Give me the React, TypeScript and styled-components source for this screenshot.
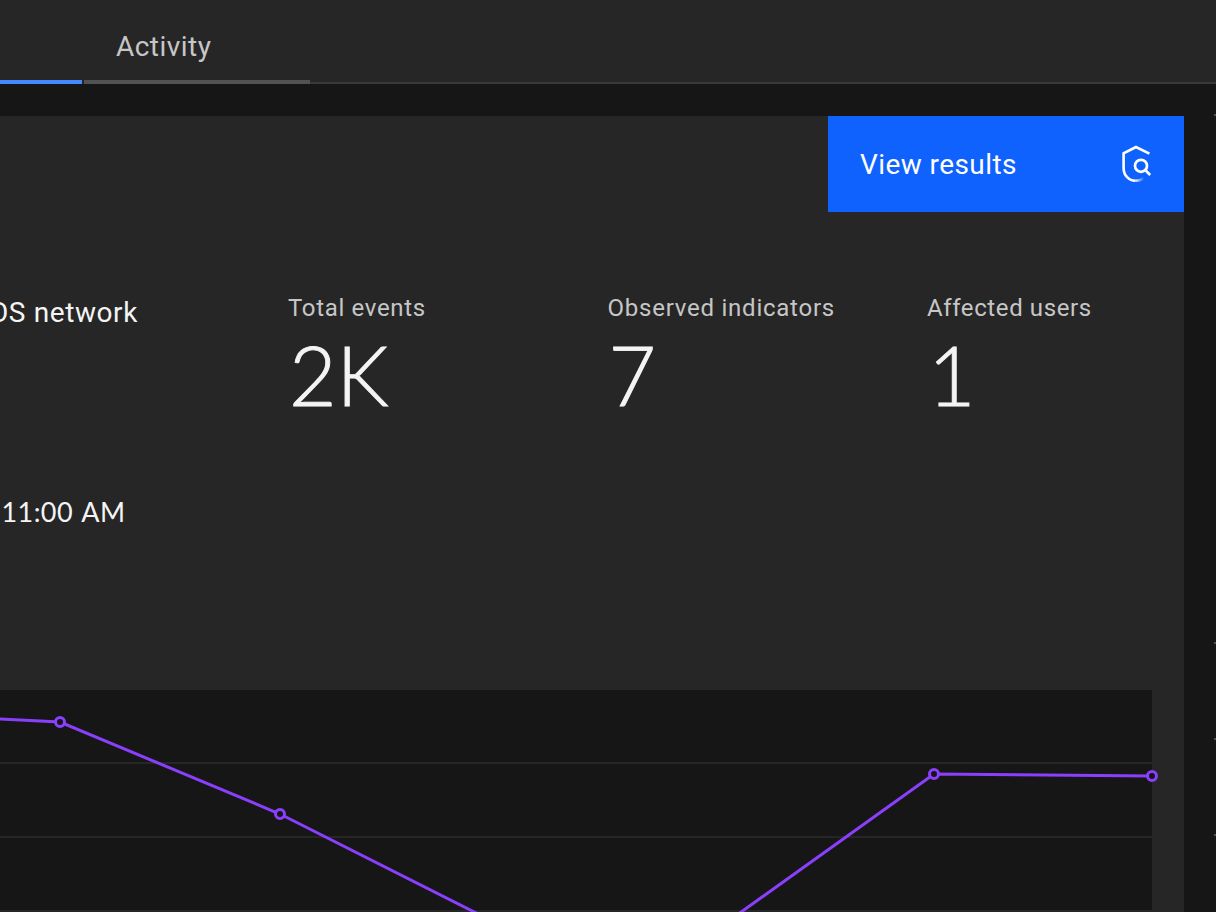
import styled, { createGlobalStyle } from "styled-components";

const Global = createGlobalStyle`
  *, *::before, *::after { box-sizing: border-box; }
  body {
    margin: 0;
    background: #161616;
    overflow: hidden;
    font-family: Roboto, "Liberation Sans", sans-serif;
    font-weight: 400;
    color: #f4f4f4;
  }
`;

const Page = styled.div`
  display: flex;
  flex-direction: column;
  width: 1216px;
  height: 912px;
  overflow: hidden;
`;

const TabBar = styled.nav`
  display: flex;
  gap: 2px;
  height: 84px;
  background: #262626;
  flex: none;
`;

const Tab = styled.div<{ $width: number; $active?: boolean }>`
  width: ${(p) => p.$width}px;
  padding: 25px 0 0 32px;
  border-bottom: 4px solid ${(p) => (p.$active ? "#4589ff" : "#525252")};
  font-size: 28px;
  line-height: 44px;
  letter-spacing: 0.46px;
  color: #c6c6c6;
  white-space: nowrap;
`;

const TabFill = styled.div`
  flex: 1;
  margin-left: -2px;
  border-bottom: 2px solid #393939;
`;

const Body = styled.div`
  display: flex;
  flex: 1;
  justify-content: space-between;
  min-height: 0;
`;

const Card = styled.main`
  display: flex;
  flex-direction: column;
  width: 1184px;
  margin-top: 32px;
  background: #262626;
`;

const Action = styled.button`
  display: flex;
  align-items: center;
  justify-content: space-between;
  align-self: flex-end;
  flex: none;
  width: 356px;
  height: 96px;
  padding: 0 32px;
  border: 0;
  background: #0f62fe;
  color: #ffffff;
  font: inherit;
  font-size: 28px;
  letter-spacing: 0.42px;
`;

const Summary = styled.section`
  display: flex;
  height: 478px;
  flex: none;
`;

const Details = styled.div`
  display: flex;
  flex-direction: column;
  align-items: flex-end;
  width: 138px;
  margin-right: 150px;
  padding-top: 79px;
  gap: 155px;
`;

const Detail = styled.div`
  height: 44px;
  font-size: 28px;
  line-height: 44px;
  letter-spacing: 0.6px;
  white-space: nowrap;
`;

const TimeDetail = styled(Detail)`
  margin-right: 12.5px;
  font-family: Lato, "Liberation Sans", sans-serif;
  font-size: 27px;
  letter-spacing: 0.4px;
  word-spacing: 2px;
`;

const Metric = styled.div`
  width: 319.5px;
  flex: none;
  padding-top: 78px;
`;

const MetricLabel = styled.div<{ $spacing: number }>`
  height: 36px;
  font-size: 24px;
  line-height: 36px;
  letter-spacing: ${(p) => p.$spacing}px;
  color: #c6c6c6;
  white-space: nowrap;
`;

const MetricValue = styled.div`
  height: 100px;
  padding-left: 1px;
  font-family: Lato, "Liberation Sans", sans-serif;
  font-weight: 300;
  font-size: 82px;
  line-height: 97px;
  -webkit-text-stroke: 0.9px #f4f4f4;
`;

const ChartSvg = styled.svg`
  display: block;
  flex: none;
  overflow: visible;
`;

const Rail = styled.aside`
  display: flex;
  flex-direction: column;
  width: 2px;
  padding-top: 30px;
`;

const RailSection = styled.div<{ $height: number }>`
  height: ${(p) => p.$height}px;
  flex: none;
  border-top: 2px solid #525252;
`;

const metrics = [
  { label: "Total events", value: "2K", spacing: 0.67 },
  { label: "Observed indicators", value: "7", spacing: 0.76 },
  { label: "Affected users", value: "1", spacing: 0.6 },
];

const points = [
  [-158, 21],
  [60, 32],
  [280, 124],
  [498, 234],
  [716, 240],
  [934, 84],
  [1152, 86],
];

const gridLines = [73, 147, 221];

const railSections = [528, 96, 96, 96];

function ShieldSearchIcon() {
  return (
    <svg width="32" height="40" viewBox="0 0 32 40" fill="none" stroke="#fff" strokeWidth="2.6">
      <defs>
        <linearGradient id="shieldFade" gradientUnits="userSpaceOnUse" x1="15" y1="0" x2="24" y2="0">
          <stop offset="0" stopColor="#fff" />
          <stop offset="1" stopColor="#fff" stopOpacity="0" />
        </linearGradient>
      </defs>
      <path d="M29.400 9.600 16 3 3.600 9.300V24C3.600 31.500 9 36.800 15.500 36.800" />
      <path stroke="url(#shieldFade)" d="M15.400 36.800c3.600 0 6.500-1 9-3" />
      <circle cx="21" cy="21.800" r="6" strokeWidth="2.700" />
      <path d="m25.200 26 5 5" strokeWidth="2.700" />
    </svg>
  );
}

function TrendChart() {
  return (
    <ChartSvg width="1152" height="222" viewBox="0 0 1152 222">
      <rect width="1152" height="222" fill="#161616" />
      {gridLines.map((y) => (
        <path key={y} d={`M0 ${y}H1152`} stroke="#262626" strokeWidth="2" />
      ))}
      <polyline points={points.map((p) => p.join(",")).join(" ")} fill="none" stroke="#8a3ffc" strokeWidth="3" />
      {points.map(([x, y]) => (
        <circle key={x} cx={x} cy={y} r="4.500" fill="#161616" stroke="#8a3ffc" strokeWidth="3" />
      ))}
    </ChartSvg>
  );
}

export default function App() {
  return (
    <Page>
      <Global />
      <TabBar>
        <Tab $width={82} $active />
        <Tab $width={226}>Activity</Tab>
        <TabFill />
      </TabBar>
      <Body>
        <Card>
          <Action>
            View results
            <ShieldSearchIcon />
          </Action>
          <Summary>
            <Details>
              <Detail>OS network</Detail>
              <TimeDetail>11:00 AM</TimeDetail>
            </Details>
            {metrics.map((m) => (
              <Metric key={m.label}>
                <MetricLabel $spacing={m.spacing}>{m.label}</MetricLabel>
                <MetricValue>{m.value}</MetricValue>
              </Metric>
            ))}
          </Summary>
          <TrendChart />
        </Card>
        <Rail>
          {railSections.map((h, i) => (
            <RailSection key={i} $height={h} />
          ))}
        </Rail>
      </Body>
    </Page>
  );
}
